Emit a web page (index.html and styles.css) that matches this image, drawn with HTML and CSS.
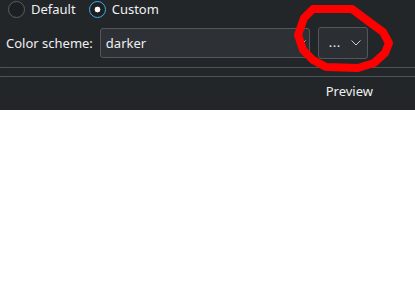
FILE: index.html
```html
<!DOCTYPE html>
<html>
<head>
<title>Color scheme</title>
<link rel="stylesheet" href="styles.css">
</head>
<body>

<div class="dialog">
	<div class="group">
		<div class="radios">
			<label class="radio"><span class="mark"></span>Default</label>
			<label class="radio checked"><span class="mark"></span>Custom</label>
		</div>
		<div class="scheme">
			<span class="label">Color scheme:</span>
			<div class="combo">
				<span>darker</span>
				<svg class="chevron" width="10" height="6" viewBox="0 0 10 6"><path d="M0.5 0.5 L5 5 L9.5 0.5" /></svg>
			</div>
			<div class="button">
				<span class="dots">...</span>
				<svg class="chevron" width="10" height="6" viewBox="0 0 10 6"><path d="M0.5 0.5 L5 5 L9.5 0.5" /></svg>
			</div>
		</div>
	</div>

	<div class="pane">
		<div class="pane-head"><span>Preview</span></div>
		<div class="tab-hint"></div>
	</div>

	<!-- red freehand marker drawn over the screenshot -->
	<svg class="scribble" width="415" height="110" viewBox="0 0 415 110">
		<path d="M313 9 L352 9 L368 21 L383 32 L389 43 L385 53 L374 63 L358 68 L326 67 L313 60 L303 50 L298 35 L304 18 Z" />
	</svg>
</div>

</body>
</html>
```

FILE: styles.css
```css
body, html {
	margin: 0;
	padding: 0;
	background: #ffffff;
	font-family: "Noto Sans", sans-serif;
	font-size: 13px;
}

.dialog {
	position: relative;
	height: 110px;
	overflow: hidden;
	background: #232629;
	color: #eff0f1;
}

.group {
	margin-left: -2px;
	padding-bottom: 8px;
	border-bottom: 1px solid #4f5358;
	border-left: 1px solid #4f5358;
	border-bottom-left-radius: 3px;
}

.radios {
	display: flex;
	align-items: center;
	height: 18px;
	padding-left: 9px;
	line-height: 18px;
}

.radio {
	display: flex;
	align-items: center;
	margin-right: 13px;
}

.mark {
	box-sizing: border-box;
	width: 17px;
	height: 17px;
	margin-right: 6px;
	border: 1px solid #5b5f64;
	border-radius: 50%;
	background: #1d2023;
}

.checked .mark {
	border-color: #3daee9;
	background: radial-gradient(circle, #fcfcfc 0 2.6px, #1d2023 3.2px);
}

.scheme {
	display: flex;
	align-items: center;
	margin-top: 9px;
	padding-left: 7px;
	height: 32px;
}

.label {
	margin-right: 7px;
}

.combo {
	box-sizing: border-box;
	display: flex;
	align-items: center;
	justify-content: space-between;
	width: 210px;
	height: 30px;
	padding: 0 3px 0 5px;
	border: 1px solid #53575c;
	border-radius: 3px;
	background: #2d3135;
}

.button {
	box-sizing: border-box;
	display: flex;
	align-items: center;
	justify-content: space-between;
	width: 50px;
	height: 32px;
	margin-left: 8px;
	padding: 0 6px 0 10px;
	border: 1px solid #53575c;
	border-radius: 3px;
	background: #2b2f33;
}

.dots {
	letter-spacing: 0.5px;
	line-height: 14px;
	padding-bottom: 2px;
}

.chevron path {
	fill: none;
	stroke: #c9cbcd;
	stroke-width: 1;
}

.pane {
	margin-top: 8px;
	margin-left: -2px;
	border-top: 1px solid #4f5358;
	border-left: 1px solid #4f5358;
	border-top-left-radius: 3px;
}

.pane-head {
	display: flex;
	justify-content: flex-end;
	height: 28px;
	padding: 5px 42px 0 0;
	line-height: 18px;
}

.tab-hint {
	width: 129px;
	margin-left: 9px;
	border-top: 1px solid #5d6166;
	border-radius: 2px 2px 0 0;
}

.scribble {
	position: absolute;
	left: 0;
	top: 0;
	pointer-events: none;
}

.scribble path {
	fill: none;
	stroke: #ff0000;
	stroke-width: 8;
	stroke-linejoin: round;
}
```
